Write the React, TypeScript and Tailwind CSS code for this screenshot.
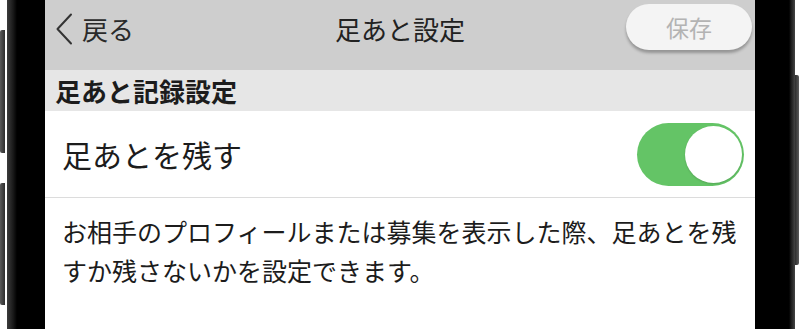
import React, { useState } from 'react';

const font = { fontFamily: '"Noto Sans CJK JP", "Noto Sans", sans-serif' };

export default function App() {
  return (
    <div className="w-[800px] h-[329px] overflow-hidden bg-white flex" style={font}>
      <LeftEdge />
      <div className="w-[710px] h-full flex flex-col">
        <NavBar />
        <SectionHeader title="足あと記録設定" />
        <ToggleRow label="足あとを残す" />
        <Description />
      </div>
      <RightEdge />
    </div>
  );
}

const LeftEdge = () => (
  <div className="flex h-full">
    <div className="w-[7px] h-full flex flex-col pt-[30px] gap-[30px]">
      <div className="w-[5px] h-[123px] rounded-l-[2px] bg-[linear-gradient(to_right,#5a5a5a,#2e2e2e)]" />
      <div className="w-[5px] h-[122px] rounded-l-[2px] bg-[linear-gradient(to_right,#5a5a5a,#2e2e2e)]" />
    </div>
    <div className="w-[38px] h-full bg-[linear-gradient(to_right,#3c3c3c,#1a1a1a_6px,#000_10px)]" />
  </div>
);

const RightEdge = () => (
  <div className="flex h-full">
    <div className="w-[40px] h-full bg-[linear-gradient(to_right,#000_34px,#1a1a1a_36px,#444)]" />
    <div className="w-[5px] h-full pt-[75px]">
      <div className="w-[4px] h-[190px] rounded-r-[2px] bg-[linear-gradient(to_right,#2e2e2e,#5a5a5a)]" />
    </div>
  </div>
);

function NavBar() {
  return (
    <div className="h-[70px] bg-[#cecece] grid grid-cols-[1fr_auto_1fr] items-start">
      <div className="flex items-center h-[58px] pl-[10px] gap-[9px] text-[#2a2a2a]">
        <svg width="18" height="32" viewBox="0 0 18 32" fill="none">
          <path d="M16 1.5 L2.5 16 L16 30.5" stroke="#333" strokeWidth="2" strokeLinecap="round" strokeLinejoin="round" />
        </svg>
        <span className="text-[26px] leading-none">戻る</span>
      </div>
      <div className="h-[58px] flex items-center text-[26px] leading-none text-[#222]">足あと設定</div>
      <div className="flex justify-end pt-[4px] pr-[3px]">
        <button className="w-[126px] h-[46px] rounded-full bg-[#f4f4f4] shadow-[0_3px_3px_rgba(0,0,0,0.28)] text-[23px] text-[#b3b3b3] leading-none">
          保存
        </button>
      </div>
    </div>
  );
}

const SectionHeader = ({ title }: { title: string }) => (
  <div className="h-[41px] bg-[#e6e6e6] flex items-center pl-[10px]">
    <span className="text-[26px] font-bold leading-none text-[#1c1c1c]">{title}</span>
  </div>
);

function ToggleRow({ label }: { label: string }) {
  const [on, setOn] = useState(true);
  return (
    <div className="h-[87px] flex items-center justify-between pl-[17px] pr-[11px] border-b border-[#dcdcdc]">
      <span className="text-[30px] leading-none text-[#1c1c1c]">{label}</span>
      <button
        onClick={() => setOn(!on)}
        className={`w-[107px] h-[63px] rounded-full flex items-center px-[2px] ${on ? 'bg-[#64c466] justify-end' : 'bg-[#e5e5e5] justify-start'}`}
      >
        <span className="w-[57px] h-[57px] rounded-full bg-white shadow-[0_1px_2px_rgba(0,0,0,0.15)]" />
      </button>
    </div>
  );
}

const Description = () => (
  <div className="pt-[14px] pl-[17px] text-[25px] leading-[39px] text-[#1c1c1c]">
    お相手のプロフィールまたは募集を表示した際、足あとを残すか残さないかを設定できます。
  </div>
);
